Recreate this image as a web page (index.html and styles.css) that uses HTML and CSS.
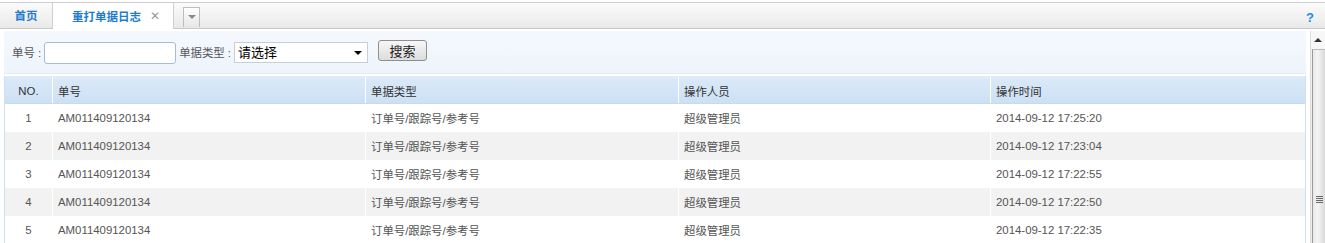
FILE: index.html
```html
<!DOCTYPE html>
<html lang="zh">
<head>
<meta charset="utf-8">
<title>重打单据日志</title>
<link rel="stylesheet" href="styles.css">
</head>
<body>
<div class="tabbar">
  <div class="tabs">
    <div class="tab">首页</div>
    <div class="tab active">重打单据日志<span class="close">✕</span></div>
    <div class="tab-menu"><span class="tri"></span></div>
    <div class="spacer"></div>
    <div class="help">?</div>
  </div>
</div>
<div class="main">
  <div class="content">
    <div class="search">
      <label class="lbl">单号 :</label>
      <input class="inp" type="text">
      <label class="lbl">单据类型 :</label>
      <div class="sel">请选择<span class="sel-arrow"></span></div>
      <button class="btn">搜索</button>
    </div>
    <div class="grid">
      <div class="row head">
        <div class="c c-no">NO.</div>
        <div class="c">单号</div>
        <div class="c">单据类型</div>
        <div class="c">操作人员</div>
        <div class="c">操作时间</div>
      </div>
      <div class="row">
        <div class="c c-no">1</div>
        <div class="c">AM011409120134</div>
        <div class="c">订单号/跟踪号/参考号</div>
        <div class="c">超级管理员</div>
        <div class="c">2014-09-12 17:25:20</div>
      </div>
      <div class="row alt">
        <div class="c c-no">2</div>
        <div class="c">AM011409120134</div>
        <div class="c">订单号/跟踪号/参考号</div>
        <div class="c">超级管理员</div>
        <div class="c">2014-09-12 17:23:04</div>
      </div>
      <div class="row">
        <div class="c c-no">3</div>
        <div class="c">AM011409120134</div>
        <div class="c">订单号/跟踪号/参考号</div>
        <div class="c">超级管理员</div>
        <div class="c">2014-09-12 17:22:55</div>
      </div>
      <div class="row alt">
        <div class="c c-no">4</div>
        <div class="c">AM011409120134</div>
        <div class="c">订单号/跟踪号/参考号</div>
        <div class="c">超级管理员</div>
        <div class="c">2014-09-12 17:22:50</div>
      </div>
      <div class="row">
        <div class="c c-no">5</div>
        <div class="c">AM011409120134</div>
        <div class="c">订单号/跟踪号/参考号</div>
        <div class="c">超级管理员</div>
        <div class="c">2014-09-12 17:22:35</div>
      </div>
    </div>
  </div>
  <div class="scrollbar">
    <div class="sb-up"><span class="sb-tri"></span></div>
    <div class="sb-thumb"><span class="grip"></span></div>
  </div>
</div>
</body>
</html>
```
FILE: styles.css
```css
* { box-sizing: border-box; }
html, body { margin: 0; padding: 0; background: #fff; }
body {
  width: 1325px;
  height: 243px;
  overflow: hidden;
  font-family: "Liberation Sans", "Noto Sans CJK SC", sans-serif;
  font-size: 11.4px;
  color: #555;
}
.tabbar { padding-top: 2px; }
.tabs {
  display: flex;
  align-items: stretch;
  height: 27px;
  border-top: 1px solid #cfcfcf;
  border-bottom: 1px solid #c8c8c8;
  background: linear-gradient(#fbfbfb, #e9e9e9);
}
.tab {
  width: 53px;
  display: flex;
  align-items: center;
  justify-content: center;
  color: #1f7ccc;
  font-weight: bold;
  font-size: 11.5px;
  border-right: 1px solid #cfcfcf;
  padding-bottom: 1px;
}
.tab.active {
  width: 121px;
  background: #fff;
  margin-bottom: -1px;
  justify-content: flex-start;
  padding-left: 19px;
}
.close {
  color: #9a9a9a;
  font-weight: normal;
  font-size: 12px;
  margin-left: 9px;
}
.tab-menu {
  width: 17px;
  height: 20px;
  margin: 4px 0 0 9px;
  border: 1px solid #bdbdbd;
  border-bottom: none;
  background: linear-gradient(#fff, #e6e6e6);
  display: flex;
  justify-content: center;
  padding-top: 7px;
}
.tri {
  width: 0; height: 0;
  border-left: 4px solid transparent;
  border-right: 4px solid transparent;
  border-top: 4px solid #8a8a8a;
}
.spacer { flex: 1; }
.help {
  width: 30px;
  display: flex;
  align-items: center;
  justify-content: center;
  color: #1c8ce6;
  font-weight: bold;
  font-size: 13px;
  padding-top: 3px;
}
.main {
  display: flex;
  margin-top: 2px;
}
.content {
  width: 1306px;
  margin-left: 4px;
}
.search {
  height: 43px;
  display: flex;
  align-items: center;
  padding-left: 8px;
  background: linear-gradient(#f5f9fe, #eef4fc);
  border-bottom: 1px solid #e4ebf4;
}
.lbl { color: #555; margin-right: 3px; }
.inp {
  width: 132px;
  height: 22px;
  border: 1px solid #a6bcd2;
  border-radius: 3px;
  margin: 1px 3px 0 0;
  background: #fff;
}
.sel {
  position: relative;
  width: 134px;
  height: 21px;
  border: 1px solid #c6cfd8;
  background: #fff;
  color: #000;
  font-size: 13px;
  line-height: 19px;
  padding-left: 3px;
  margin-top: 1px;
}
.sel-arrow {
  position: absolute;
  right: 5px;
  top: 8px;
  width: 0; height: 0;
  border-left: 4px solid transparent;
  border-right: 4px solid transparent;
  border-top: 4px solid #000;
}
.btn {
  margin-left: 10px;
  margin-top: -3px;
  width: 49px;
  height: 21px;
  border: 1px solid #8f8f8f;
  border-radius: 3px;
  background: linear-gradient(#f7f7f7, #dcdcdc);
  font-family: "Liberation Sans", "Noto Sans CJK SC", sans-serif;
  font-size: 13px;
  color: #222;
  padding: 0;
}
.grid {
  margin-top: 2px;
  border-left: 1px solid #cfe0f2;
  border-right: 1px solid #cfe0f2;
}
.row {
  display: grid;
  grid-template-columns: 48px 313px 313px 312px 1fr;
  height: 28px;
}
.row.alt { background: #f2f2f2; }
.row.head {
  height: 28px;
  background: linear-gradient(#dbe9f8, #cde1f4);
  border-top: 1px solid #e2edf8;
  border-bottom: 1px solid #c7dbef;
  color: #333;
}
.c {
  display: flex;
  align-items: center;
  padding-left: 5px;
  border-right: 1px solid #fff;
  white-space: nowrap;
}
.c:last-child { border-right: none; }
.c-no { justify-content: center; padding-left: 0; }
.head .c { padding-top: 1px; }
.scrollbar {
  width: 15px;
  margin-left: 4px;
  display: flex;
  flex-direction: column;
  height: 212px;
  background: #f0f0f0;
  border-left: 1px solid #dcdcdc;
}
.sb-up {
  height: 18px;
  display: flex;
  justify-content: center;
  align-items: center;
  background: #f7f7f7;
}
.sb-tri {
  width: 0; height: 0;
  border-left: 4px solid transparent;
  border-right: 4px solid transparent;
  border-bottom: 4px solid #333;
}
.sb-thumb {
  flex: 1;
  margin-left: 1px;
  border-left: 1px solid #999;
  border-top: 1px solid #bbb;
  background: linear-gradient(90deg, #e9e9e9, #f4f4f4 40%, #d9d9d9);
  display: flex;
  justify-content: center;
  padding-top: 146px;
}
.grip {
  width: 7px;
  height: 8px;
  background: repeating-linear-gradient(#666 0 1px, transparent 1px 2px);
}
```
